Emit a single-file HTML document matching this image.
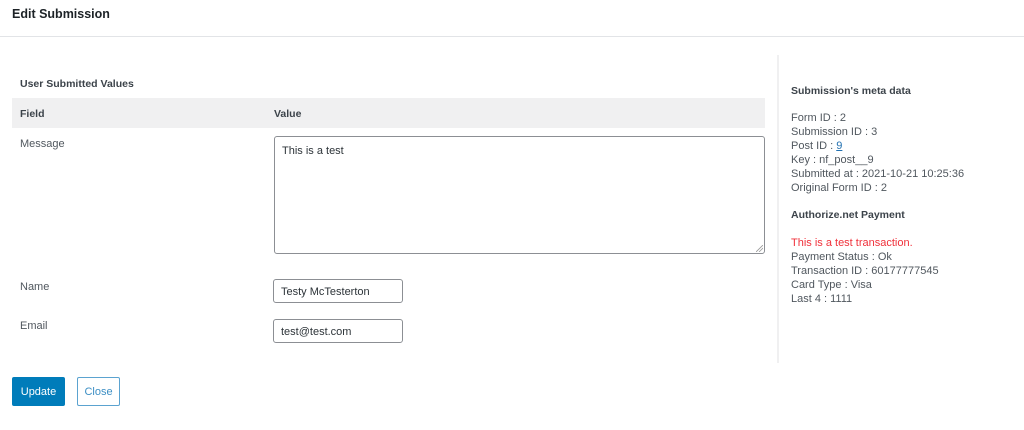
<!DOCTYPE html>
<html><head><style>
*{box-sizing:border-box;margin:0;padding:0}
body{width:1024px;height:430px;background:#fff;font-family:"Liberation Sans",sans-serif;color:#50575e;position:relative;overflow:hidden;font-size:11px}
.a{position:absolute;white-space:nowrap}
.b{font-weight:bold;color:#3c434a}
.in{position:absolute;border:1px solid #8c8f94;border-radius:3px;background:#fff;padding-left:7px;font-size:11px;color:#2c3338}
</style></head><body>
<div class="a" style="left:12px;top:7px;font-size:12.5px;font-weight:bold;color:#1d2327">Edit Submission</div>
<div class="a" style="left:0;top:36px;width:1024px;height:1px;background:#e2e4e7"></div>
<div class="a b" style="left:20px;top:78px;font-size:10.5px">User Submitted Values</div>
<div class="a" style="left:12px;top:98px;width:753px;height:30px;background:#f0f0f1"></div>
<div class="a b" style="left:20px;top:108px;font-size:10.5px">Field</div>
<div class="a b" style="left:274px;top:108px;font-size:10.5px">Value</div>
<div class="a" style="left:20px;top:138px">Message</div>
<div class="in" style="left:274px;top:136px;width:491px;height:118px;padding-top:8px">This is a test
<svg style="position:absolute;right:1px;bottom:1px" width="7" height="7"><path d="M0 7L7 0M3 7L7 3" stroke="#999" stroke-width="0.8"/></svg></div>
<div class="a" style="left:20px;top:281px">Name</div>
<div class="in" style="left:273px;top:279px;width:130px;height:24px;line-height:24px">Testy McTesterton</div>
<div class="a" style="left:20px;top:320px">Email</div>
<div class="in" style="left:273px;top:319px;width:130px;height:24px;line-height:24px">test@test.com</div>
<div class="a" style="left:12px;top:377px;width:53px;height:29px;background:#007cba;border-radius:2px;color:#fff;text-align:center;line-height:31px">Update</div>
<div class="a" style="left:77px;top:377px;width:43px;height:29px;border:1px solid #5ba3d0;border-radius:2px;color:#3d8fc4;text-align:center;line-height:29px">Close</div>
<div class="a" style="left:777px;top:55px;width:2px;height:308px;background:#f0f0f1"></div>
<div class="a b" style="left:791px;top:85px;font-size:10.5px">Submission's meta data</div>
<div class="a" style="left:791px;top:111px;line-height:14px">Form ID : 2<br>Submission ID : 3<br>Post ID : <span style="color:#2271b1;text-decoration:underline">9</span><br>Key : nf_post__9<br>Submitted at : 2021-10-21 10:25:36<br>Original Form ID : 2</div>
<div class="a b" style="left:791px;top:209px;font-size:10.5px">Authorize.net Payment</div>
<div class="a" style="left:791px;top:236px;line-height:14px"><span style="color:#f0303a">This is a test transaction.</span><br>Payment Status : Ok<br>Transaction ID : 60177777545<br>Card Type : Visa<br>Last 4 : 1111</div>
</body></html>
